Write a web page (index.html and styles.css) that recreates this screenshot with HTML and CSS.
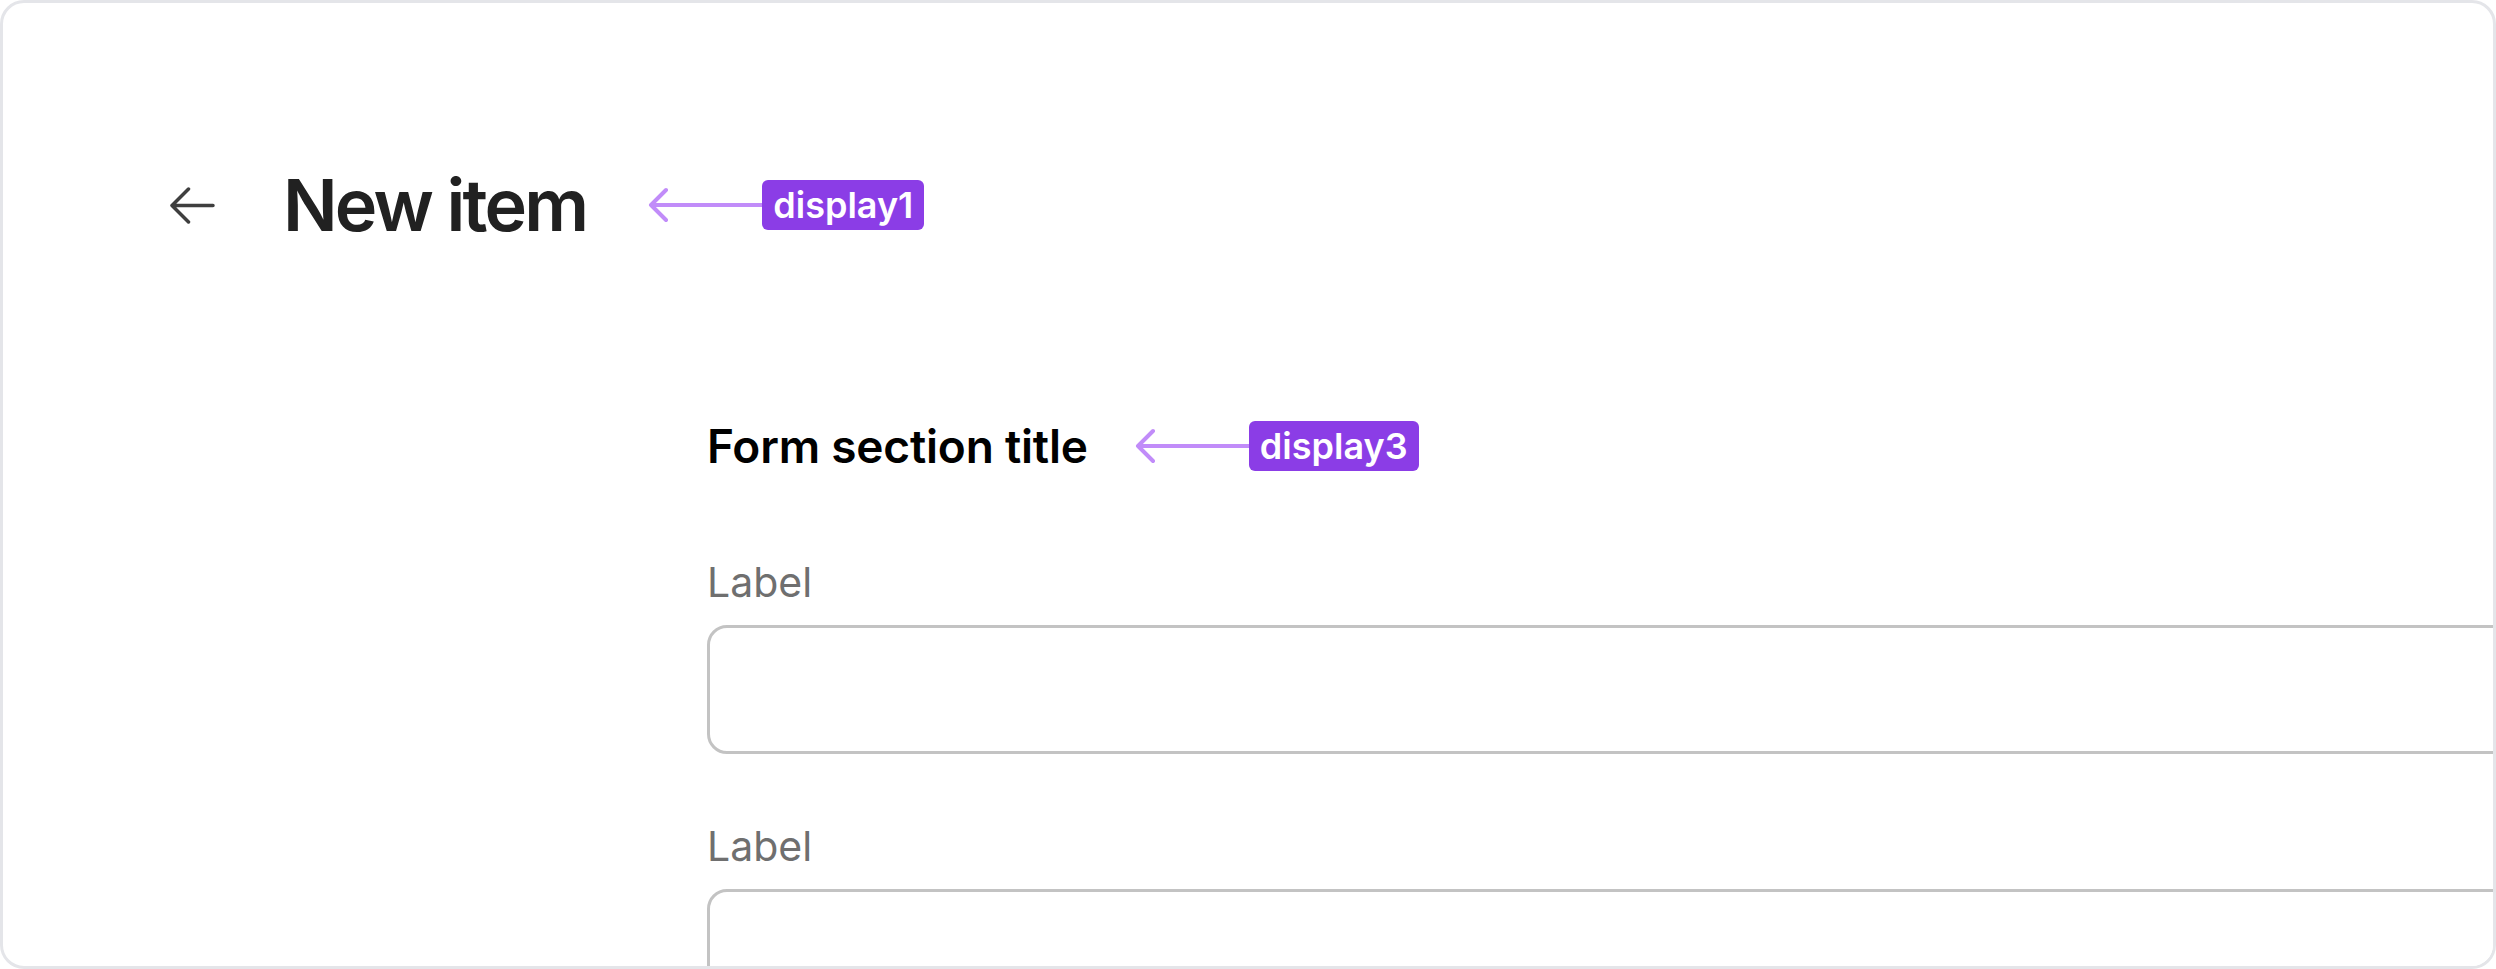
FILE: index.html
```html
<!DOCTYPE html>
<html lang="en">
<head>
<meta charset="utf-8">
<title>New item</title>
<link rel="stylesheet" href="styles.css">
</head>
<body>
<div class="frame">
  <header class="page-header">
    <button class="back" aria-label="Back">
      <svg width="46" height="37" viewBox="0 0 46 37" fill="none">
        <path d="M3 18.5H44M19.5 2L3 18.5L19.5 35" stroke="#3f3f3f" stroke-width="3.5" stroke-linecap="round" stroke-linejoin="round"/>
      </svg>
    </button>
    <h1 class="display1">New item</h1>
    <div class="note note-d1">
      <svg class="note-arrow" width="114" height="36" viewBox="0 0 114 36" fill="none">
        <path d="M3 18H114M18 3L3 18L18 33" stroke="#c18cf9" stroke-width="4" stroke-linecap="round" stroke-linejoin="round"/>
      </svg>
      <span class="badge">display1</span>
    </div>
  </header>

  <section class="form-section">
    <div class="section-head">
      <h2 class="display3">Form section title</h2>
      <div class="note note-d3">
        <svg class="note-arrow" width="114" height="36" viewBox="0 0 114 36" fill="none">
          <path d="M3 18H114M18 3L3 18L18 33" stroke="#c18cf9" stroke-width="4" stroke-linecap="round" stroke-linejoin="round"/>
        </svg>
        <span class="badge">display3</span>
      </div>
    </div>

    <div class="field">
      <label class="label">Label</label>
      <div class="input"></div>
    </div>
    <div class="field">
      <label class="label">Label</label>
      <div class="input"></div>
    </div>
  </section>
</div>
</body>
</html>
```

FILE: styles.css
```css
* { box-sizing: border-box; }

html, body {
  margin: 0;
  padding: 0;
  background: #ffffff;
}

body {
  font-family: Inter, "Noto Sans", sans-serif;
}

.frame {
  width: 2496px;
  height: 969px;
  border: 3px solid #e4e5e9;
  border-radius: 24px;
  overflow: hidden;
  background: #ffffff;
}

.page-header {
  display: flex;
  align-items: center;
  height: 88px;
  margin-top: 158px;
  padding-left: 166px;
}

.back {
  display: flex;
  align-items: center;
  justify-content: center;
  padding: 0;
  border: 0;
  background: none;
  width: 46px;
  height: 37px;
}

.display1 {
  margin: 0 0 0 68px;
  font-size: 72px;
  line-height: 88px;
  font-weight: 600;
  color: #212121;
  letter-spacing: -2.8px;
}

.note {
  display: flex;
  align-items: center;
}

.note-d1 { margin-left: 62px; }
.note-d3 { margin-left: 47px; }

.note-arrow { display: block; }

.badge {
  display: flex;
  align-items: center;
  height: 50px;
  padding: 0 11px;
  background: #8b3de6;
  border-radius: 6px;
  color: #ffffff;
  font-size: 36px;
  font-weight: 600;
  line-height: 1;
}

.form-section {
  margin-top: 172px;
  padding-left: 704px;
}

.section-head {
  display: flex;
  align-items: center;
  height: 50px;
}

.display3 {
  margin: 0;
  font-size: 46px;
  line-height: 50px;
  font-weight: 600;
  color: #000000;
  letter-spacing: -0.2px;
}

.field {
  display: flex;
  flex-direction: column;
  gap: 17px;
}

.section-head + .field { margin-top: 85px; }
.field + .field { margin-top: 66px; }

.label {
  font-size: 41px;
  line-height: 52px;
  font-weight: 400;
  color: #6f6f6f;
}

.input {
  width: 2200px;
  height: 129px;
  border: 3px solid #c3c3c3;
  border-radius: 20px;
  background: #ffffff;
}
```
